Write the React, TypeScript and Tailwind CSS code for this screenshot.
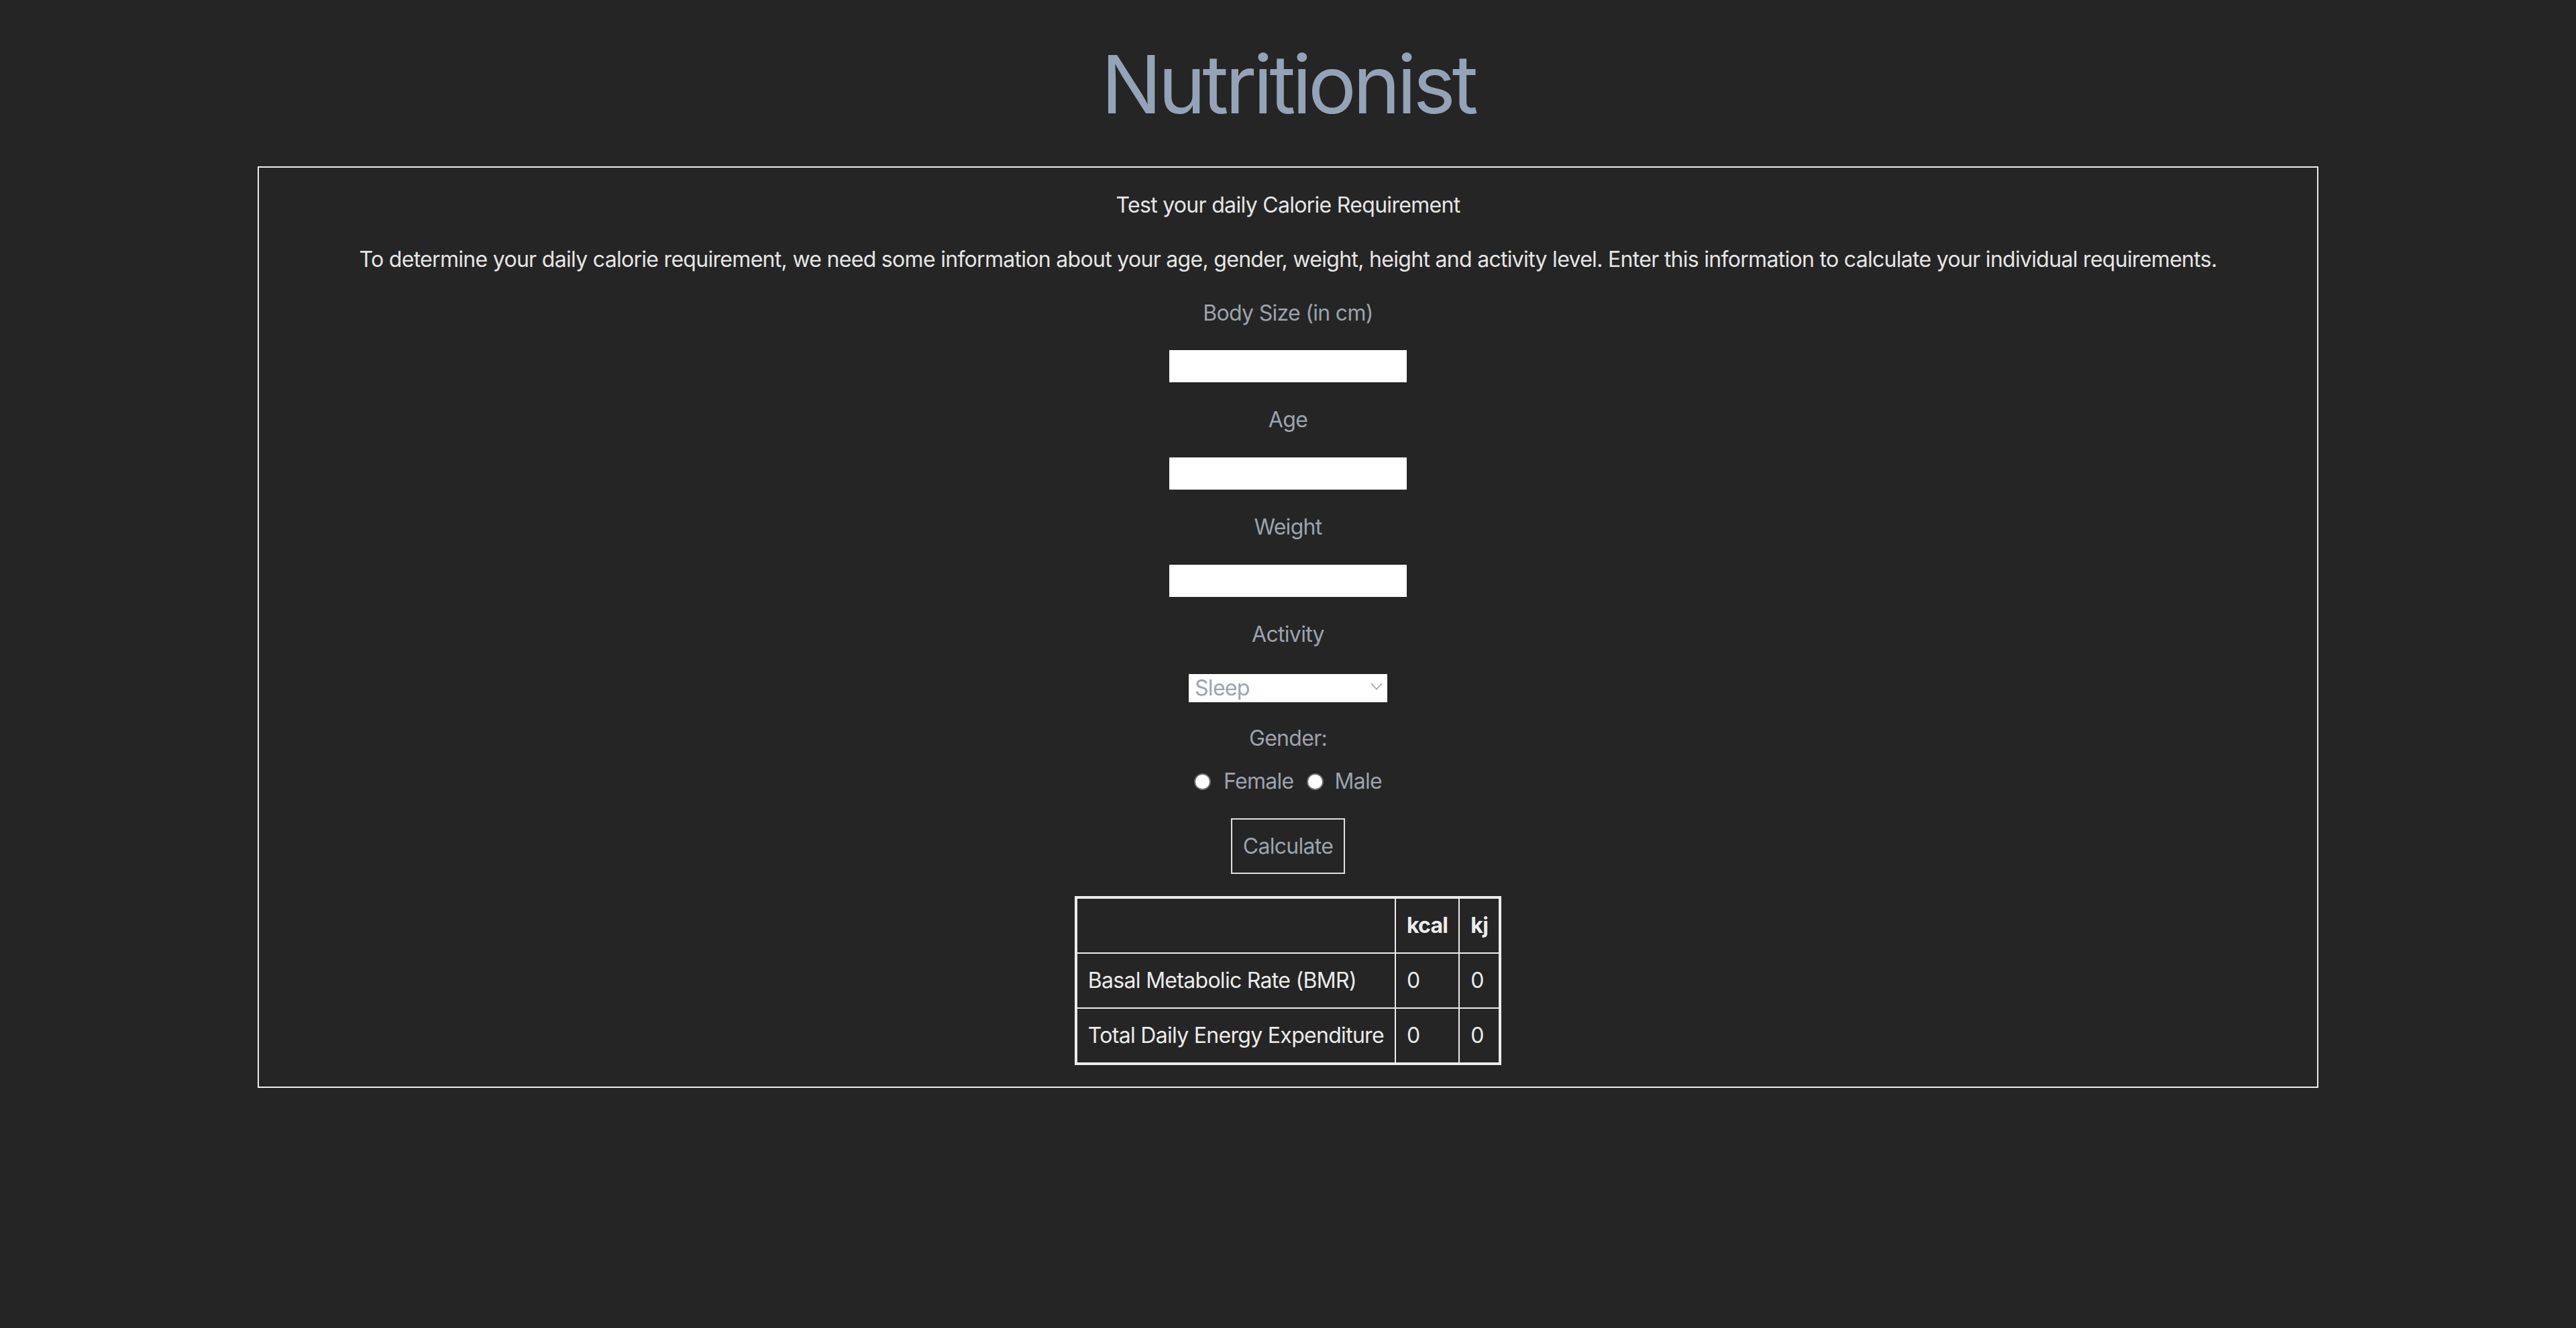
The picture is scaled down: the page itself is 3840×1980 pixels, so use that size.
import React from "react";

export default function App() {
  return (
    <div className="min-h-screen bg-[#252525] font-['Inter','Noto_Sans',sans-serif] pb-[300px]">
      <h1 className="pt-[66px] text-center text-[120px] leading-[120px] font-normal text-[#94a3b8] tracking-[-5.2px]">
        Nutritionist
      </h1>
      <div className="mx-auto mt-[62px] w-[3072px] border-2 border-[#ececec] flex flex-col items-center text-[32px] leading-[48px] tracking-[-0.7px]">
        <p className="mt-[32px] text-[#e6e6e6]">Test your daily Calorie Requirement</p>
        <p className="mt-[33px] text-[#e6e6e6]">
          To determine your daily calorie requirement, we need some information about your age, gender, weight, height and activity level. Enter this information to calculate your individual requirements.
        </p>
        <label className="mt-[32px] text-[#9ca3af]">Body Size (in cm)</label>
        <input type="text" className="mt-[31px] w-[354px] h-[48px] bg-white outline-none border-0" />
        <label className="mt-[32px] text-[#9ca3af]">Age</label>
        <input type="text" className="mt-[32px] w-[354px] h-[48px] bg-white outline-none border-0" />
        <label className="mt-[32px] text-[#9ca3af]">Weight</label>
        <input type="text" className="mt-[32px] w-[354px] h-[48px] bg-white outline-none border-0" />
        <label className="mt-[32px] text-[#9ca3af]">Activity</label>
        <div className="relative mt-[32px] w-[296px] h-[42px]">
          <select className="w-full h-full appearance-none bg-white text-[#9ca3af] text-[32px] leading-[42px] tracking-[-0.7px] pl-[9px] outline-none border-0">
            <option>Sleep</option>
            <option>Sitting</option>
            <option>Light activity</option>
            <option>Moderate activity</option>
            <option>Heavy activity</option>
          </select>
          <svg className="pointer-events-none absolute right-[7px] top-[16px]" width="18" height="11" viewBox="0 0 18 11" fill="none">
            <path d="M1 1 L9 9.5 L17 1" stroke="#9ca3af" strokeWidth="1.8" />
          </svg>
        </div>
        <p className="mt-[33px] text-[#9ca3af]">Gender:</p>
        <div className="mt-[16px] flex items-center h-[48px] text-[#9ca3af]">
          <span className="w-[25px] h-[25px] rounded-full bg-white border-2 border-[#6f6f6f] mr-[19px]" />
          <span className="mr-[19px]">Female</span>
          <span className="w-[25px] h-[25px] rounded-full bg-white border-2 border-[#6f6f6f] mr-[17px]" />
          <span>Male</span>
        </div>
        <button className="mt-[31px] border-2 border-[#e0e0e0] px-[16px] py-[16px] leading-[47px] text-[#9ca3af] bg-transparent">
          Calculate
        </button>
        <table className="mt-[33px] mb-[32px] border-collapse border-4 border-[#ececec] text-[#ececec] text-left">
          <thead>
            <tr>
              <th className="border-2 border-[#ececec] px-[16px] py-[16px]"></th>
              <th className="border-2 border-[#ececec] px-[16px] py-[16px] font-bold text-left">kcal</th>
              <th className="border-2 border-[#ececec] px-[16px] py-[16px] font-bold text-left">kj</th>
            </tr>
          </thead>
          <tbody>
            <tr>
              <td className="border-2 border-[#ececec] px-[16px] py-[16px]">Basal Metabolic Rate (BMR)</td>
              <td className="border-2 border-[#ececec] px-[16px] py-[16px]">0</td>
              <td className="border-2 border-[#ececec] px-[16px] py-[16px]">0</td>
            </tr>
            <tr>
              <td className="border-2 border-[#ececec] px-[16px] py-[16px]">Total Daily Energy Expenditure</td>
              <td className="border-2 border-[#ececec] px-[16px] py-[16px]">0</td>
              <td className="border-2 border-[#ececec] px-[16px] py-[16px]">0</td>
            </tr>
          </tbody>
        </table>
      </div>
    </div>
  );
}
